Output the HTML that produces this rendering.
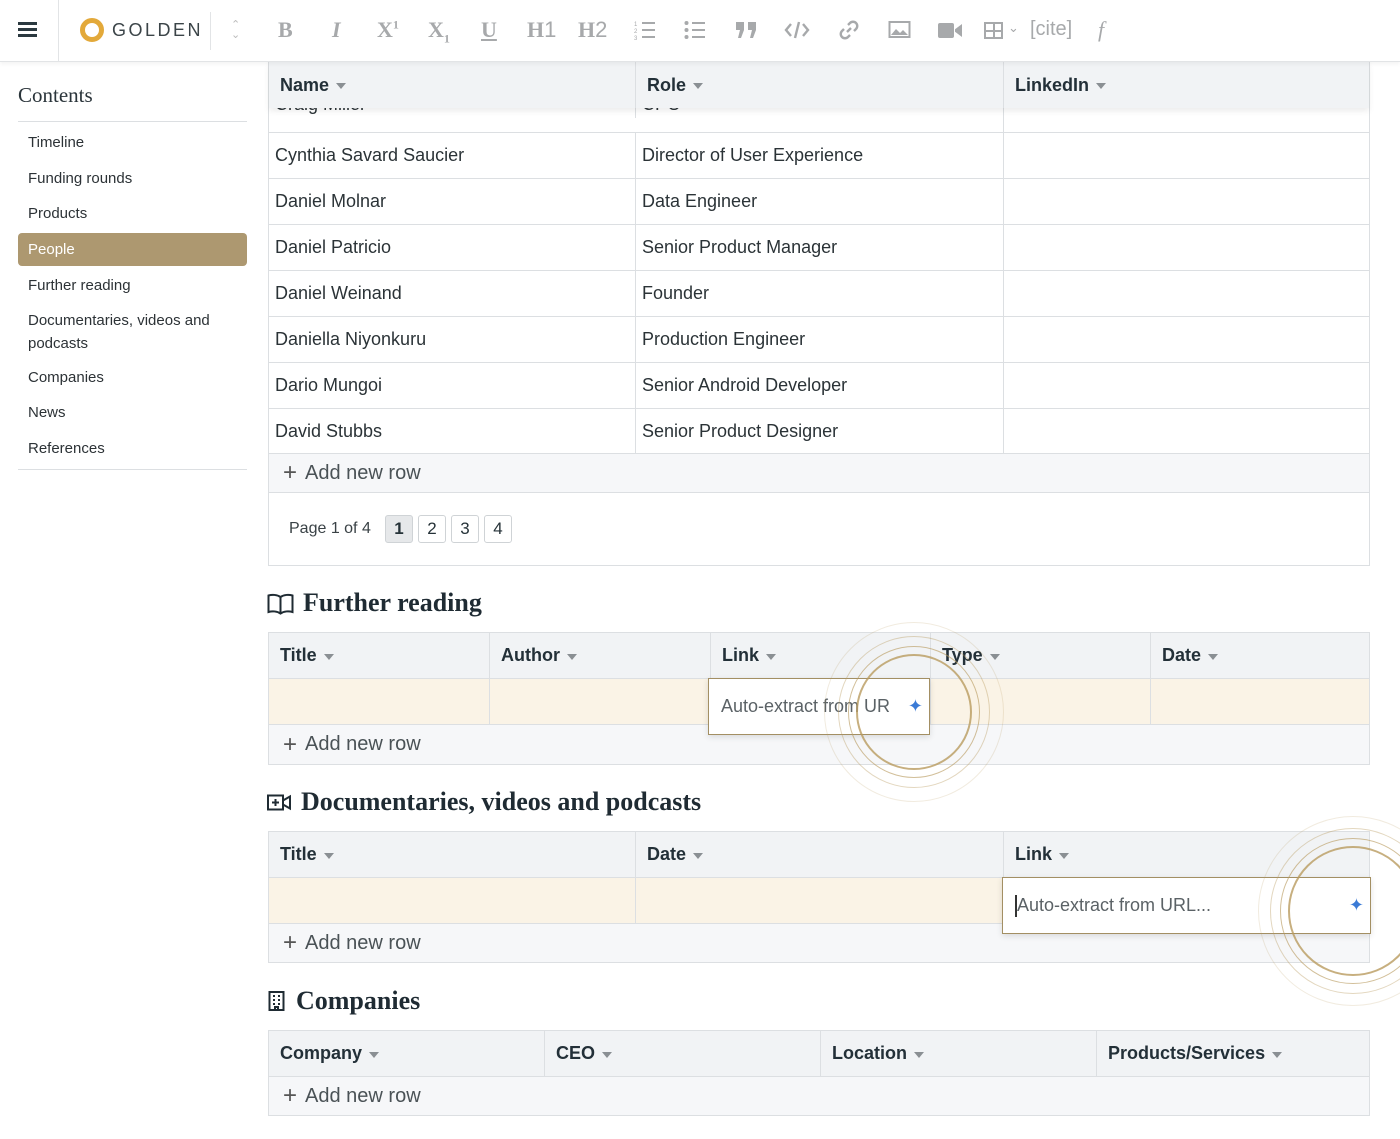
<!DOCTYPE html>
<html><head><meta charset="utf-8">
<style>
*{box-sizing:border-box;margin:0;padding:0}
body{width:1400px;height:1139px;overflow:hidden;background:#fff;font-family:"Liberation Sans",sans-serif;color:#253238;position:relative}
.a{position:absolute}
.tb{position:absolute;left:0;top:0;width:1400px;height:62px;background:#fff;border-bottom:1px solid #e2e4e6;box-shadow:0 2px 4px rgba(0,0,0,.05);z-index:5}
.ic{position:absolute;top:17px;font-family:"Liberation Serif",serif;font-size:22px;color:#a7a9ab;font-weight:bold}
.side a{position:absolute;left:28px;font-size:15px;color:#2c3236;text-decoration:none;line-height:23px}
.tbl{position:absolute;left:268px;width:1102px;border:1px solid #dcdfe2}
.h{position:absolute;background:#f1f3f5;border-bottom:1px solid #dcdfe2}
.hc{position:absolute;top:0;height:100%;border-left:1px solid #dcdfe2;font-weight:bold;font-size:18px;padding-left:11px;display:flex;align-items:center;color:#233038}
.hc:first-child{border-left:none}
.car{display:inline-block;width:0;height:0;border-left:5px solid transparent;border-right:5px solid transparent;border-top:6px solid #8a8f93;margin-left:7px;margin-top:2px}
.row{position:absolute;left:0;width:1100px;border-bottom:1px solid #dcdfe2;font-size:18px}
.cell{position:absolute;top:0;height:100%;padding-left:6px;display:flex;align-items:center;border-left:1px solid #dcdfe2;color:#2b3337}
.add{position:absolute;left:0;width:1100px;background:#f6f7f9;font-size:20px;color:#4a5256;display:flex;align-items:center;padding-left:14px}
.add b{font-weight:normal;font-size:24px;margin-right:8px;color:#555}
.sec{position:absolute;left:268px;font-family:"Liberation Serif",serif;font-weight:bold;font-size:26px;color:#1f2b33}
.cream{background:#faf3e6}
.ring{position:absolute;border-radius:50%;border:1.5px solid rgba(185,155,95,.8)}
.inp{position:absolute;background:#fff;border:1.5px solid #a38f63;font-size:18px;color:#5b6266;display:flex;align-items:center;padding-left:12px;box-shadow:0 2px 6px rgba(0,0,0,.12)}
svg.t{position:absolute;top:19px}
</style></head><body>

<div class="tb">
  <div class="a" style="left:18px;top:22px;width:19px;height:3px;background:#2b3940;box-shadow:0 6px 0 #2b3940,0 12px 0 #2b3940"></div>
  <div class="a" style="left:58px;top:0;width:1px;height:62px;background:#e2e4e6"></div>
  <div class="a" style="left:80px;top:18px;width:24px;height:24px;border-radius:50%;border:5px solid #e3a93a"></div>
  <div class="a" style="left:112px;top:20px;font-size:18px;letter-spacing:2.5px;color:#3b4448">GOLDEN</div>
  <div class="a" style="left:210px;top:12px;width:1px;height:38px;background:#e2e4e6"></div>
  <div class="a" style="left:231px;top:20px;font-size:11px;color:#bbb;line-height:10px">&#8963;<br>&#8964;</div>
  <div class="ic" style="left:278px">B</div>
  <div class="ic" style="left:332px;font-style:italic">I</div>
  <div class="ic" style="left:377px">X<sup style="font-size:12px">1</sup></div>
  <div class="ic" style="left:428px">X<sub style="font-size:12px">1</sub></div>
  <div class="ic" style="left:481px;text-decoration:underline">U</div>
  <div class="ic" style="left:527px">H<span style="font-weight:normal;font-family:'Liberation Sans'">1</span></div>
  <div class="ic" style="left:578px">H<span style="font-weight:normal;font-family:'Liberation Sans'">2</span></div>
  <svg class="t" style="left:634px" width="22" height="22" viewBox="0 0 22 22"><path d="M8 4h13M8 11h13M8 18h13" stroke="#a7a9ab" stroke-width="2"/><text x="0" y="7" font-size="6" fill="#a7a9ab" font-family="Liberation Sans">1</text><text x="0" y="14" font-size="6" fill="#a7a9ab" font-family="Liberation Sans">2</text><text x="0" y="21" font-size="6" fill="#a7a9ab" font-family="Liberation Sans">3</text></svg>
  <svg class="t" style="left:684px" width="22" height="22" viewBox="0 0 22 22"><path d="M8 4h13M8 11h13M8 18h13" stroke="#a7a9ab" stroke-width="2"/><circle cx="2.5" cy="4" r="2" fill="#a7a9ab"/><circle cx="2.5" cy="11" r="2" fill="#a7a9ab"/><circle cx="2.5" cy="18" r="2" fill="#a7a9ab"/></svg>
  <svg class="t" style="left:735px" width="22" height="22" viewBox="0 0 22 22"><path d="M1 3h8v8l-3 8H3l2-8H1zM13 3h8v8l-3 8h-3l2-8h-4z" fill="#a7a9ab"/></svg>
  <svg class="t" style="left:784px" width="26" height="22" viewBox="0 0 26 22"><path d="M7 5 2 11l5 6M19 5l5 6-5 6M15 3l-4 16" stroke="#a7a9ab" stroke-width="2.4" fill="none"/></svg>
  <svg class="t" style="left:838px" width="22" height="22" viewBox="0 0 22 22"><path d="M9 13 13 9M10 6l2-2a4 4 0 0 1 6 6l-2 2M12 16l-2 2a4 4 0 0 1-6-6l2-2" stroke="#a7a9ab" stroke-width="2.4" fill="none"/></svg>
  <svg class="t" style="left:888px" width="23" height="22" viewBox="0 0 23 22"><rect x="1.5" y="3" width="20" height="15" fill="none" stroke="#a7a9ab" stroke-width="2"/><path d="M3 16l5-6 4 4 3-3 5 5z" fill="#a7a9ab"/></svg>
  <div class="a" style="left:938px;top:23px;width:16px;height:15px;background:#a7a9ab;border-radius:2px"></div>
  <div class="a" style="left:955px;top:24px;width:7px;height:13px;background:#a7a9ab;clip-path:polygon(0 40%,100% 0,100% 100%,0 60%)"></div>
  <div class="a" style="left:984px;top:22px;width:19px;height:17px;border:2px solid #a7a9ab;background:linear-gradient(#a7a9ab,#a7a9ab) center/2px 100% no-repeat,linear-gradient(#a7a9ab,#a7a9ab) center/100% 2px no-repeat"></div>
  <div class="a" style="left:1008px;top:20px;font-size:13px;color:#a7a9ab">&#8964;</div>
  <div class="a" style="left:1030px;top:18px;font-size:20px;color:#a7a9ab">[cite]</div>
  <div class="a" style="left:1098px;top:17px;font-size:22px;color:#a7a9ab;font-family:'Liberation Serif';font-style:italic">f</div>
</div>

<div class="side">
  <div class="a" style="left:18px;top:83px;font-family:'Liberation Serif',serif;font-size:21px;color:#2a343a">Contents</div>
  <div class="a" style="left:18px;top:121px;width:229px;height:1px;background:#dcdfe2"></div>
  <a style="top:131px">Timeline</a>
  <a style="top:167px">Funding rounds</a>
  <a style="top:202px">Products</a>
  <div class="a" style="left:18px;top:233px;width:229px;height:33px;background:#ad9870;border-radius:4px"></div>
  <a style="top:238px;color:#fff">People</a>
  <a style="top:274px">Further reading</a>
  <a style="top:309px">Documentaries, videos and<br>podcasts</a>
  <a style="top:366px">Companies</a>
  <a style="top:401px">News</a>
  <a style="top:437px">References</a>
  <div class="a" style="left:18px;top:469px;width:229px;height:1px;background:#dcdfe2"></div>
</div>

<div class="tbl" style="top:62px;height:504px;border-top:none">
  <div class="row" style="top:46px;height:25px;overflow:hidden"><div class="cell" style="border:none;left:0;align-items:flex-start;top:-14px">Craig Miller</div><div class="cell" style="left:366px;align-items:flex-start;top:-14px">CPO</div><div class="cell" style="left:734px"></div></div>
  <div class="h" style="left:0;top:0;width:1100px;height:46px;box-shadow:0 3px 6px rgba(0,0,0,.08);border-bottom:none">
    <div class="hc" style="left:0;width:366px">Name<span class="car"></span></div>
    <div class="hc" style="left:366px;width:368px">Role<span class="car"></span></div>
    <div class="hc" style="left:734px;width:366px">LinkedIn<span class="car"></span></div>
  </div>
  <div class="row" style="top:71px;height:46px"><div class="cell" style="border:none;left:0">Cynthia Savard Saucier</div><div class="cell" style="left:366px">Director of User Experience</div><div class="cell" style="left:734px"></div></div>
  <div class="row" style="top:117px;height:46px"><div class="cell" style="border:none;left:0">Daniel Molnar</div><div class="cell" style="left:366px">Data Engineer</div><div class="cell" style="left:734px"></div></div>
  <div class="row" style="top:163px;height:46px"><div class="cell" style="border:none;left:0">Daniel Patricio</div><div class="cell" style="left:366px">Senior Product Manager</div><div class="cell" style="left:734px"></div></div>
  <div class="row" style="top:209px;height:46px"><div class="cell" style="border:none;left:0">Daniel Weinand</div><div class="cell" style="left:366px">Founder</div><div class="cell" style="left:734px"></div></div>
  <div class="row" style="top:255px;height:46px"><div class="cell" style="border:none;left:0">Daniella Niyonkuru</div><div class="cell" style="left:366px">Production Engineer</div><div class="cell" style="left:734px"></div></div>
  <div class="row" style="top:301px;height:46px"><div class="cell" style="border:none;left:0">Dario Mungoi</div><div class="cell" style="left:366px">Senior Android Developer</div><div class="cell" style="left:734px"></div></div>
  <div class="row" style="top:347px;height:45px"><div class="cell" style="border:none;left:0">David Stubbs</div><div class="cell" style="left:366px">Senior Product Designer</div><div class="cell" style="left:734px"></div></div>
  <div class="add" style="top:392px;height:39px;border-bottom:1px solid #dcdfe2"><b>+</b>Add new row</div>
  <div class="a" style="left:20px;top:458px;font-size:16px;color:#3a4246">Page 1 of 4</div>
  <div class="a" style="left:116px;top:453px;width:28px;height:28px;border:1px solid #cfd3d6;border-radius:3px;background:#e6e8ea;font-weight:bold;font-size:17px;text-align:center;line-height:26px">1</div>
  <div class="a" style="left:149px;top:453px;width:28px;height:28px;border:1px solid #cfd3d6;border-radius:3px;font-size:17px;text-align:center;line-height:26px">2</div>
  <div class="a" style="left:182px;top:453px;width:28px;height:28px;border:1px solid #cfd3d6;border-radius:3px;font-size:17px;text-align:center;line-height:26px">3</div>
  <div class="a" style="left:215px;top:453px;width:28px;height:28px;border:1px solid #cfd3d6;border-radius:3px;font-size:17px;text-align:center;line-height:26px">4</div>
</div>

<svg class="a" style="left:267px;top:593px" width="27" height="22" viewBox="0 0 27 22"><path d="M13.5 4C10 1.5 5 1.5 1.5 2.5V19C5 18 10 18 13.5 20.5 17 18 22 18 25.5 19V2.5C22 1.5 17 1.5 13.5 4ZM13.5 4V20.5" fill="none" stroke="#1f2b33" stroke-width="2"/></svg>
<div class="sec" style="left:303px;top:588px">Further reading</div>
<div class="tbl" style="top:632px;height:133px">
  <div class="h" style="left:0;top:0;width:1100px;height:46px">
    <div class="hc" style="left:0;width:220px">Title<span class="car"></span></div>
    <div class="hc" style="left:220px;width:221px">Author<span class="car"></span></div>
    <div class="hc" style="left:441px;width:220px">Link<span class="car"></span></div>
    <div class="hc" style="left:661px;width:220px">Type<span class="car"></span></div>
    <div class="hc" style="left:881px;width:219px">Date<span class="car"></span></div>
  </div>
  <div class="row cream" style="top:46px;height:46px"><div class="cell" style="left:220px"></div><div class="cell" style="left:661px"></div><div class="cell" style="left:881px"></div></div>
  <div class="add" style="top:92px;height:39px"><b>+</b>Add new row</div>
</div>
<div class="inp" style="left:708px;top:678px;width:222px;height:57px">Auto-extract from UR<span style="position:absolute;right:6px;color:#3b7bd6;font-size:18px">&#10022;</span></div>

<svg class="a" style="left:267px;top:794px" width="25" height="17" viewBox="0 0 25 17"><rect x="1" y="1.5" width="15" height="14" fill="none" stroke="#1f2b33" stroke-width="2"/><path d="M8.5 5V12M5 8.5H12M16 6.5 23 2.5V14.5L16 10.5" fill="none" stroke="#1f2b33" stroke-width="2"/></svg>
<div class="sec" style="left:301px;top:787px">Documentaries, videos and podcasts</div>
<div class="tbl" style="top:831px;height:132px">
  <div class="h" style="left:0;top:0;width:1100px;height:46px">
    <div class="hc" style="left:0;width:366px">Title<span class="car"></span></div>
    <div class="hc" style="left:366px;width:368px">Date<span class="car"></span></div>
    <div class="hc" style="left:734px;width:366px">Link<span class="car"></span></div>
  </div>
  <div class="row cream" style="top:46px;height:46px"><div class="cell" style="left:366px"></div></div>
  <div class="add" style="top:92px;height:38px"><b>+</b>Add new row</div>
</div>
<div class="inp" style="left:1002px;top:877px;width:369px;height:57px"><span style="border-left:2px solid #333;height:22px"></span>Auto-extract from URL...<span style="position:absolute;right:6px;color:#3b7bd6;font-size:18px">&#10022;</span></div>

<svg class="a" style="left:268px;top:991px" width="17" height="20" viewBox="0 0 17 20"><rect x="1.5" y="1" width="14" height="18" fill="none" stroke="#1f2b33" stroke-width="2"/><path d="M5 5h2M10 5h2M5 9h2M10 9h2M5 13h2M10 13h2M7 19v-3h3v3" stroke="#1f2b33" stroke-width="2" fill="none"/></svg>
<div class="sec" style="left:296px;top:986px">Companies</div>
<div class="tbl" style="top:1030px;height:86px">
  <div class="h" style="left:0;top:0;width:1100px;height:46px">
    <div class="hc" style="left:0;width:275px">Company<span class="car"></span></div>
    <div class="hc" style="left:275px;width:276px">CEO<span class="car"></span></div>
    <div class="hc" style="left:551px;width:276px">Location<span class="car"></span></div>
    <div class="hc" style="left:827px;width:273px">Products/Services<span class="car"></span></div>
  </div>
  <div class="add" style="top:46px;height:38px"><b>+</b>Add new row</div>
</div>

<div class="ring" style="left:856px;top:654px;width:116px;height:116px;border-width:2px"></div>
<div class="ring" style="left:848px;top:646px;width:132px;height:132px;opacity:.8"></div>
<div class="ring" style="left:838px;top:636px;width:152px;height:152px;opacity:.5"></div>
<div class="ring" style="left:824px;top:622px;width:180px;height:180px;opacity:.25"></div>
<div class="ring" style="left:1288px;top:846px;width:130px;height:130px;border-width:2px"></div>
<div class="ring" style="left:1280px;top:838px;width:146px;height:146px;opacity:.8"></div>
<div class="ring" style="left:1270px;top:828px;width:166px;height:166px;opacity:.5"></div>
<div class="ring" style="left:1258px;top:816px;width:190px;height:190px;opacity:.25"></div>
</body></html>
